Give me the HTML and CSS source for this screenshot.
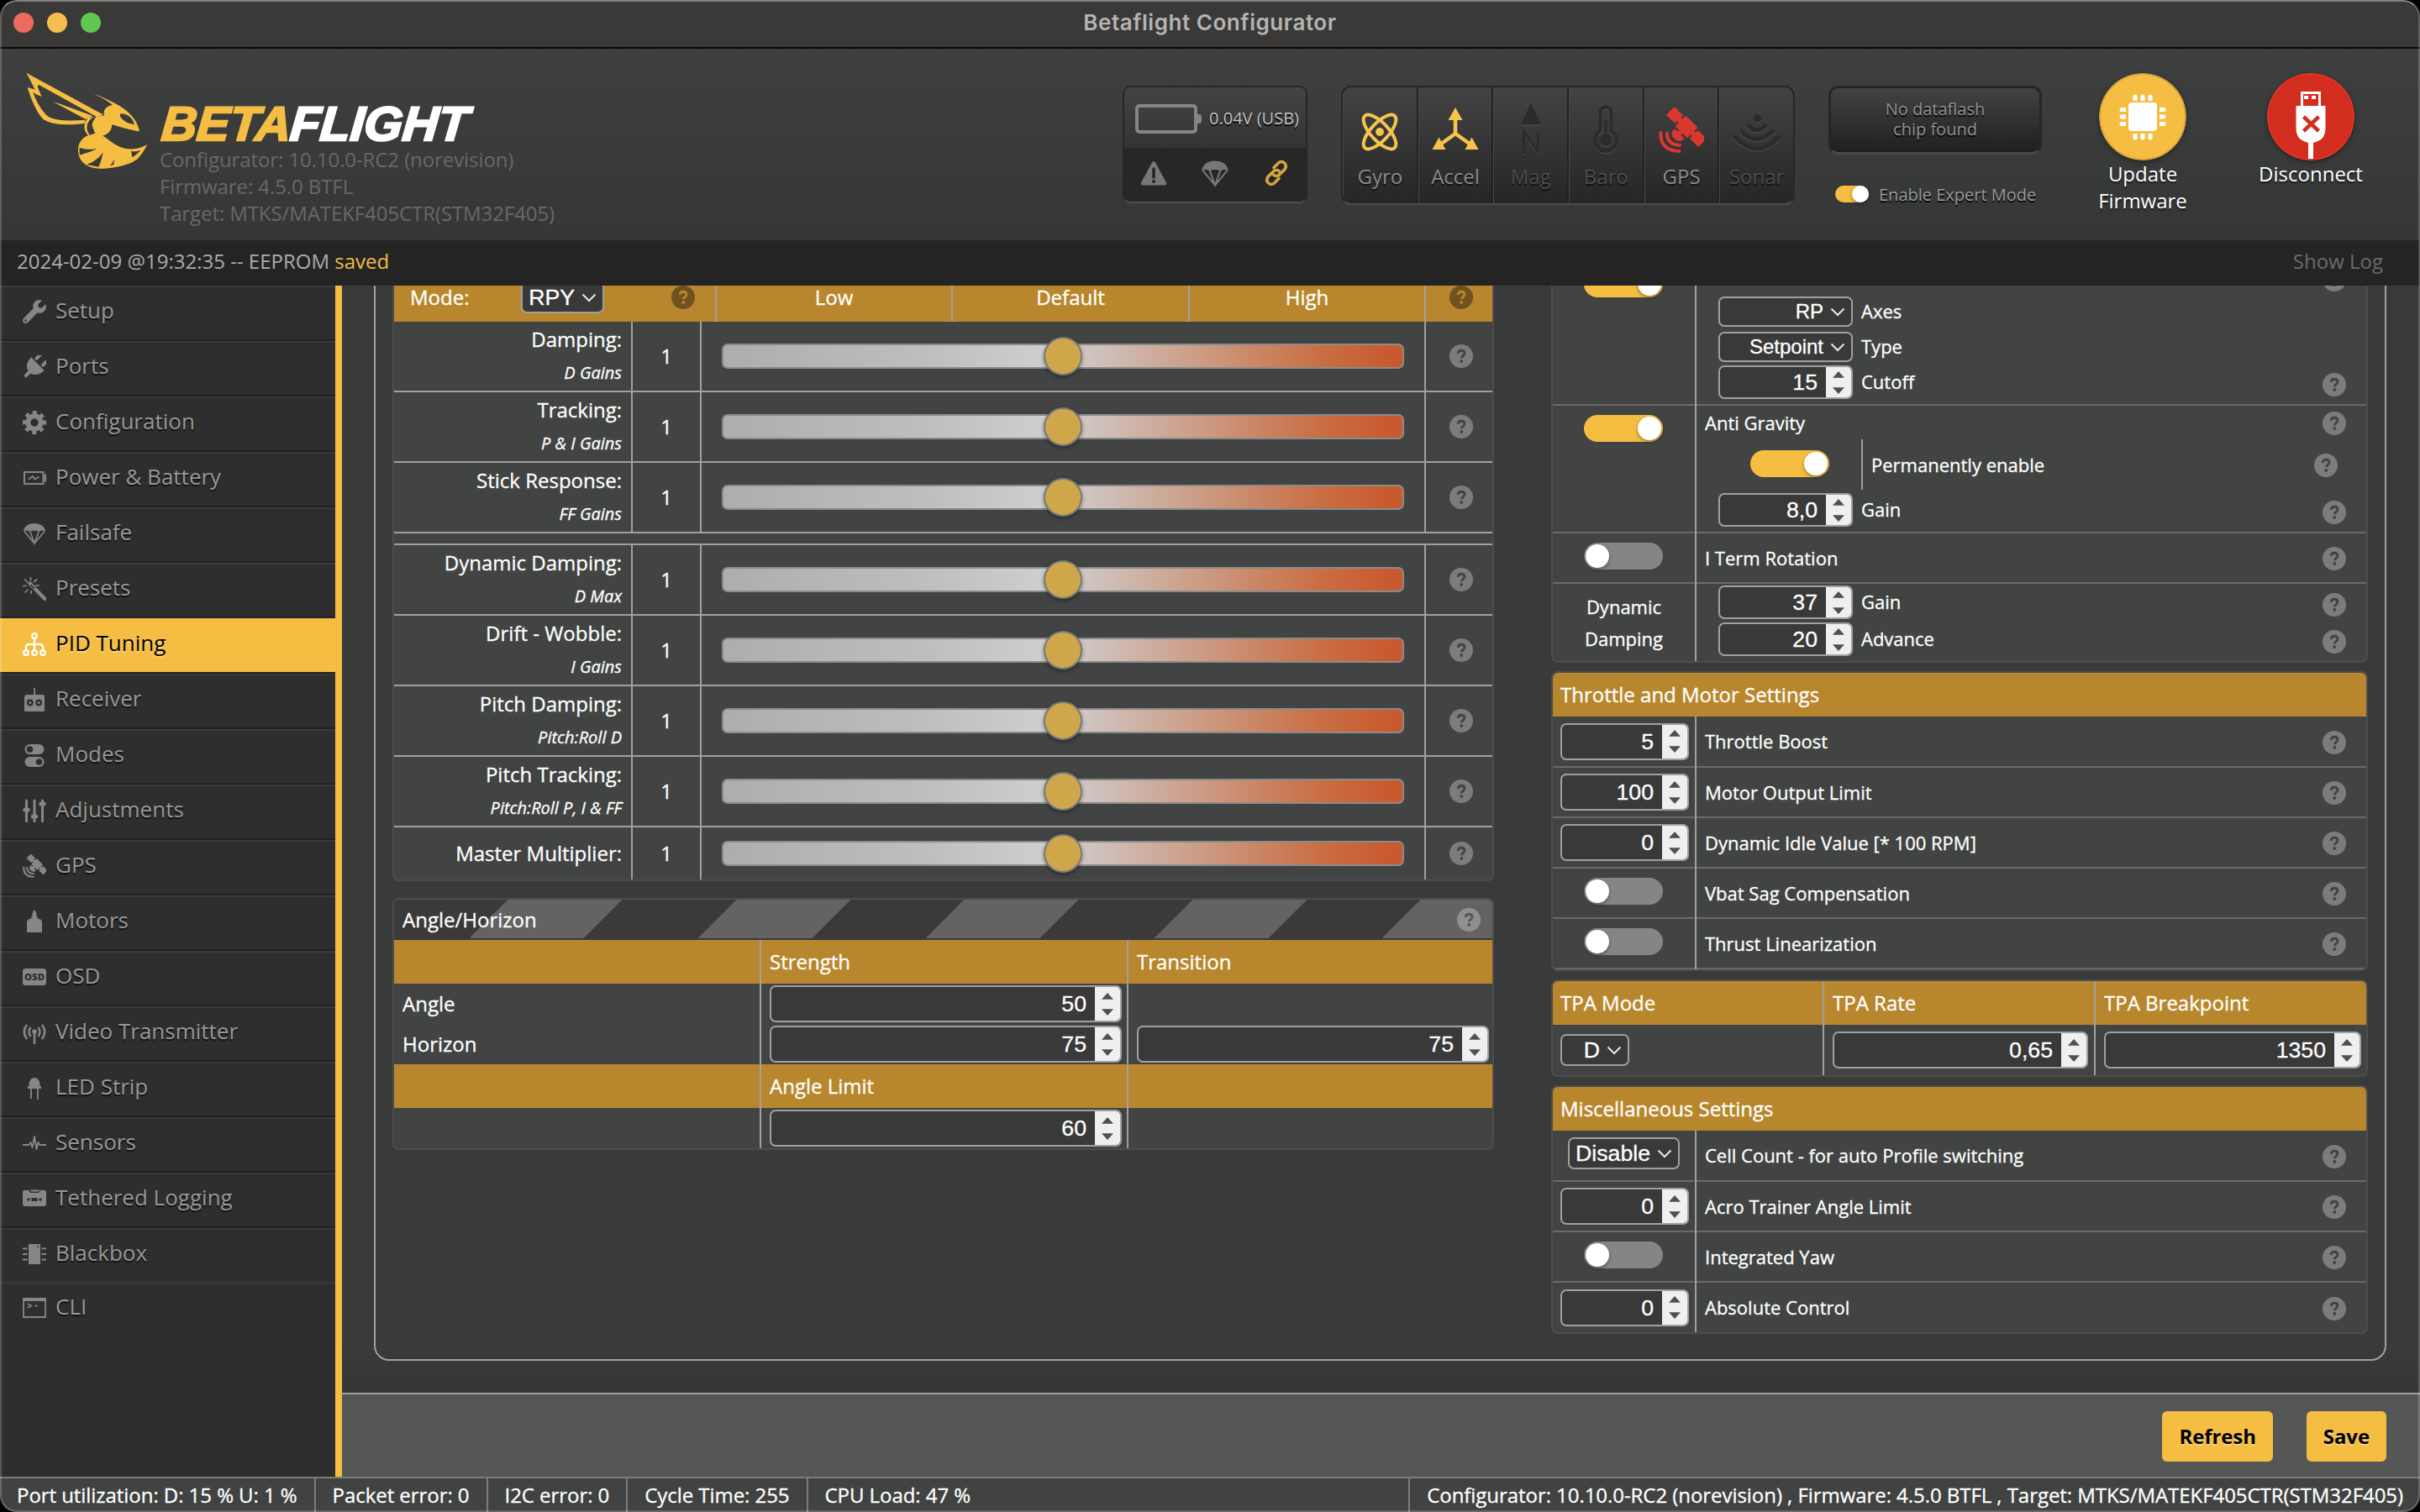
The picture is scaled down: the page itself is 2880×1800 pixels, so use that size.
FILE: index.html
```html
<!DOCTYPE html>
<html lang="en">
<head>
<meta charset="utf-8">
<title>Betaflight Configurator</title>
<link rel="stylesheet" href="styles.css">
</head>
<body>
<svg class="defs" width="0" height="0" aria-hidden="true">
  <symbol id="i-help" viewBox="0 0 28 28"><circle cx="14" cy="14" r="14" fill="currentColor"/><path d="M10.2 10.8c.2-2.3 1.7-3.5 3.9-3.5 2.3 0 3.9 1.3 3.9 3.3 0 2.6-3.6 2.9-3.6 5.6" fill="none" stroke="var(--mark)" stroke-width="2.9"/><circle cx="14.3" cy="20" r="1.9" fill="var(--mark)"/></symbol>
  <symbol id="i-chev" viewBox="0 0 18 11"><path d="M1.5 1.5L9 9l7.500-7.500" fill="none" stroke="#e8e8e8" stroke-width="2"/></symbol>
  <symbol id="i-setup" viewBox="0 0 512 512"><path fill="currentColor" d="M507.730 109.100c-2.240-9.030-13.540-12.090-20.120-5.510l-74.360 74.360-67.880-11.310-11.310-67.880 74.360-74.360c6.620-6.620 3.430-17.900-5.660-20.160-47.380-11.740-99.550.91-136.580 37.930-39.640 39.640-50.550 97.100-34.050 147.200L18.740 402.760c-24.990 24.990-24.990 65.510 0 90.500 24.990 24.990 65.510 24.990 90.500 0l213.210-213.210c50.120 16.710 107.470 5.680 147.370-34.220 37.070-37.070 49.700-89.320 37.910-136.730zM64 472c-13.250 0-24-10.750-24-24 0-13.260 10.750-24 24-24s24 10.740 24 24c0 13.250-10.750 24-24 24z"/></symbol>
  <symbol id="i-ports" viewBox="0 0 28 28"><g transform="rotate(45 14 14)" fill="currentColor"><rect x="6.500" y="-3" width="4" height="10" rx="2"/><rect x="17.500" y="-3" width="4" height="10" rx="2"/><path d="M3 8.500h22c0 7-3 12.500-9 14v7.500h-4v-7.500c-6-1.500-9-7-9-14z"/></g></symbol>
  <symbol id="i-gear" viewBox="0 0 28 28"><g fill="none" stroke="currentColor"><circle cx="14" cy="14" r="7.700" stroke-width="6"/><circle cx="14" cy="14" r="11.900" stroke-width="4.200" stroke-dasharray="5 4.346" transform="rotate(-12 14 14)"/></g></symbol>
  <symbol id="i-batt" viewBox="0 0 28 28"><path fill="none" stroke="currentColor" stroke-width="2" d="M2 7h22.500v14H2z"/><path fill="currentColor" d="M25.500 9.500H28v9h-2.500z"/><path d="M7 15.500l5-3.500 2.500 3.500 5-3" fill="none" stroke="currentColor" stroke-width="1.700"/></symbol>
  <symbol id="i-chute" viewBox="0 0 28 28"><g fill="currentColor"><path d="M1 12C1.500 5.500 7 2 14 2s12.500 3.500 13 10c-2-1.800-5.500-1.800-7.500 0-2.500-1.800-8.500-1.800-11 0-2-1.800-5.500-1.800-7.500 0z"/><path fill="none" stroke="currentColor" stroke-width="1.700" d="M2 11.500L14 26 26 11.500M8.800 11.500L14 26l5.200-14.500"/></g></symbol>
  <symbol id="i-wand" viewBox="0 0 28 28"><path d="M8.500 7.500l18 18.500" stroke="currentColor" stroke-width="4.400" stroke-linecap="round"/><path d="M9.500 9l4.500 4.800" stroke="#2e2e2e" stroke-width="1.600"/><path fill="none" stroke="currentColor" stroke-width="1.700" d="M9.500 0v4.500M2 2.500l4 4M0 10.500h5M2.500 18.500l4-4M10 16v4M17 2.500l-4 3.500M15 10h5"/></symbol>
  <symbol id="i-pid" viewBox="0 0 28 28"><g fill="none" stroke="currentColor" stroke-width="2.300"><circle cx="14" cy="4" r="2.800"/><circle cx="4" cy="24" r="2.800"/><circle cx="14" cy="24" r="2.800"/><circle cx="24" cy="24" r="2.800"/><path d="M14 7v14M4 21v-3q0-4 4-4h12q4 0 4 4v3"/></g></symbol>
  <symbol id="i-rx" viewBox="0 0 28 28"><path fill="currentColor" d="M13.200 0h1.800v8h8q3 0 3 3v15q0 3-3 3H5q-3 0-3-3V11q0-3 3-3h8.200z"/><circle cx="8.800" cy="17.500" r="3.900" fill="#2e2e2e"/><circle cx="19.200" cy="17.500" r="3.900" fill="#2e2e2e"/><circle cx="8.800" cy="17.500" r="1.500" fill="currentColor"/><circle cx="19.200" cy="17.500" r="1.500" fill="currentColor"/></symbol>
  <symbol id="i-modes" viewBox="0 0 28 28"><rect x="2.500" y="1" width="23" height="12" rx="6" fill="currentColor"/><rect x="2.500" y="16" width="23" height="12" rx="6" fill="currentColor"/><circle cx="8.500" cy="7" r="3.800" fill="#2e2e2e"/><circle cx="19.500" cy="22" r="3.800" fill="#2e2e2e"/></symbol>
  <symbol id="i-adj" viewBox="0 0 28 28"><path stroke="currentColor" stroke-width="3" stroke-linecap="round" fill="none" d="M4.500 2v25M14 2v25M23.500 2v25"/><path stroke="currentColor" stroke-width="5" stroke-linecap="round" d="M2.800 13h3.400M12.300 21h3.400M21.800 6h3.400"/></symbol>
  <symbol id="i-gps" viewBox="0 0 54 54"><g fill="currentColor"><g transform="translate(33 23) rotate(45)"><rect x="-10" y="-9" width="20" height="18" rx="1"/><rect x="-27" y="-7" width="14.500" height="14"/><rect x="-14" y="-3" width="5" height="6"/><rect x="12.500" y="-7" width="14.500" height="14"/><rect x="9" y="-3" width="5" height="6"/></g><path d="M18 25a11 11 0 0 0 13 13l-4-5 1-6-5 1z"/><path d="M16.500 27a9 9 0 0 0 12 12l-2.500-10z"/></g><path fill="none" stroke="currentColor" stroke-width="4" stroke-linecap="round" d="M10 31q0 13 15 14M2.500 30q-1 21 22 22"/></symbol>
  <symbol id="i-motor" viewBox="0 0 28 28"><path fill="currentColor" d="M14 0c2 2 3 5 2.500 8l1.500 1v2h2.500l2.500 2.500V27H5V13.500L7.500 11H10V9l1.500-1C11 5 12 2 14 0z"/></symbol>
  <symbol id="i-vtx" viewBox="0 0 28 28"><path fill="none" stroke="currentColor" stroke-width="2.600" d="M5 5Q-1.500 13 5 22M23 5q6.500 8 0 17M9.500 8q-4 5 0 11M18.500 8q4 5 0 11M14 12v16"/><circle cx="14" cy="13" r="2.800" fill="currentColor"/></symbol>
  <symbol id="i-led" viewBox="0 0 28 28"><path fill="currentColor" d="M7.500 10a6.500 8 0 0 1 13 0v2H22v3H6v-3h1.500z"/><path stroke="currentColor" stroke-width="1.800" d="M10 15v12M18 15v13"/></symbol>
  <symbol id="i-sens" viewBox="0 0 28 28"><path fill="none" stroke="currentColor" stroke-width="1.900" stroke-linejoin="round" d="M0 16h7.500l2-3 2 6L14 6l2.500 15L18.500 13l2 3H28"/></symbol>
  <symbol id="i-teth" viewBox="0 0 28 28"><path fill="currentColor" d="M2 4h5l2 3h10l2-3h5q2 0 2 3v13q0 3-3 3H3q-3 0-3-3V7q0-3 2-3z"/><path fill="currentColor" d="M8.500 3.500h12l-1.500 2h-9z"/><circle cx="7" cy="15" r="1.800" fill="#2e2e2e"/><circle cx="21" cy="15" r="1.800" fill="#2e2e2e"/><path fill="#2e2e2e" d="M10.500 13h7v4h-7z"/></symbol>
  <symbol id="i-bbox" viewBox="0 0 28 28"><path fill="currentColor" d="M7 2h14v24H7z"/><path stroke="currentColor" stroke-width="2" d="M0 7.500h5.500M0 14h5.500M0 20.500h5.500M22.500 7.500H28M22.500 14H28M22.500 20.500H28"/><circle cx="18" cy="5" r="1" fill="#2e2e2e"/></symbol>
  <symbol id="i-cli" viewBox="0 0 28 28"><path fill="none" stroke="currentColor" stroke-width="1.800" d="M1 3h26v22H1z"/><path fill="currentColor" d="M1 2.500h26v3.500H1z"/><path fill="none" stroke="currentColor" stroke-width="1.400" d="M5.500 9l5 2.500-5 2.500M14 11.500h4"/></symbol>
</svg>

<div class="window">
  <header class="titlebar">
    <div class="lights"><i class="red"></i><i class="yel"></i><i class="grn"></i></div>
    <span>Betaflight Configurator</span>
  </header>

  <div class="topbar">
    <svg class="bee" viewBox="0 0 480 390" width="160" height="130">
      <g fill="#f5bd42">
        <path fill-rule="evenodd" d="M22 20L298 170l-24 8L66 62 62 70l14 34-16-6 -14-8c12 34 32 68 54 86 26 16 84 16 132 12l0 12c-50 8-112 8-142-10C70 184 40 120 26 72l28 8z"/>
        <path d="M46 50l30 54-16-8-20-44z"/>
        <path d="M118 124c40 12 84 30 142 50l-26 12z"/>
        <path fill-rule="evenodd" d="M264 95c60 24 150 60 162 134-34-4-72-16-98-24 0 22-16 38-40 42l-34-4c-6 2 22-8 6-60 12-8 26-10 40-10-4-18 4-34 30-38-16-16-40-26-66-40zM356 172c4 16 26 30 52 32-6-20-20-36-46-38-4 0-6 2-6 6z"/>
        <path d="M244 180c-18 16-22 48 2 66l20-8c10-20-2-46 26-62z"/>
        <path fill-rule="evenodd" d="M254 240c20-4 40 2 60 18 20 16 50 34 74 34 26 2 50-6 66-16-10 20-20 36-34 50-16 16-70 36-134 36-46 0-80-24-79-68 0-28 20-48 47-54zM212 287v27c24-8 44-12 62-24-22 6-42 4-62-3zM238 348l42 8c8-16 12-32 16-52-14 20-32 34-58 44zM320 352l14-4 2-20c-4 10-8 18-16 24zM396 300l4 22c16-10 24-18 30-26-12 4-22 6-34 4z"/>
      </g>
      <path fill="#3a3b3a" d="M260 180c-24 12-28 42-12 62l20-6c-6-8-2-10-8-16 2-6-6-12-2-20 2-8 6-14 14-22z"/>
    </svg>
    <div class="brand">
      <svg class="wordmark" width="390" height="58" viewBox="0 0 390 58">
        <g transform="translate(1 53) skewX(-5)" class="wm">
          <text x="0" y="0" fill="#f5bd42" stroke="#f5bd42" textLength="154" lengthAdjust="spacingAndGlyphs">BETA</text>
          <text x="153" y="0" fill="#fff" stroke="#fff" textLength="212" lengthAdjust="spacingAndGlyphs">FLIGHT</text>
        </g>
      </svg>
      <p>Configurator: 10.10.0-RC2 (norevision)</p>
      <p>Firmware: 4.5.0 BTFL</p>
      <p>Target: MTKS/MATEKF405CTR(STM32F405)</p>
    </div>

    <div class="battbox">
      <div class="b-top">
        <svg width="80" height="35" viewBox="0 0 80 35"><rect x="2" y="2" width="70" height="31" rx="3" fill="none" stroke="#858585" stroke-width="4"/><path d="M74 12h2q3 0 3 3v5q0 3-3 3h-2z" fill="#858585"/></svg>
        <span>0.04V (USB)</span>
      </div>
      <div class="b-bot">
        <svg width="32" height="30" viewBox="0 0 32 30"><path d="M16 1q1.300 0 2 1.500l13 24q1 3-2 3H3q-3 0-2-3l13-24Q14.700 1 16 1z" fill="#777"/><path d="M16 10v10" stroke="#272727" stroke-width="3.600" stroke-linecap="round"/><circle cx="16" cy="25" r="2.100" fill="#272727"/></svg>
        <svg width="34" height="34" color="#777"><use href="#i-chute"/></svg>
        <svg width="32" height="32" viewBox="0 0 32 32"><g fill="none" stroke="#d4a63e" stroke-width="3.600" stroke-linecap="round"><path d="M13 9.500l5.500-5.500c4.500-4 11.500 1.500 7.500 7.500l-6.500 6.500c-2.500 2-5.500 2-7.500-.5"/><path d="M19 22.500L13.500 28c-4.500 4-11.500-1.500-7.500-7.500l6.500-6.500c2.500-2 5.500-2 7.500.5"/></g></svg>
      </div>
    </div>

    <div class="sensors">
      <div class="sensor on"><svg width="60" height="64" viewBox="0 0 60 64"><g fill="none" stroke="#f6c44d" stroke-width="4"><ellipse cx="30" cy="36" rx="10.500" ry="26" transform="rotate(43 30 36)"/><ellipse cx="30" cy="36" rx="10.500" ry="26" transform="rotate(-43 30 36)"/></g><circle cx="30" cy="36" r="5" fill="#f6c44d"/></svg><span>Gyro</span></div>
      <div class="sensor on"><svg width="60" height="64" viewBox="0 0 60 64"><path d="M30 16v22L12 51M30 38l18 13" fill="none" stroke="#f6c44d" stroke-width="4.500"/><path fill="#f6c44d" d="M30 7l8.500 15h-17zM2.500 57l8-14.500 8 14.500zM57.500 57l-8-14.500-8 14.500z"/></svg><span>Accel</span></div>
      <div class="sensor"><svg width="60" height="64" viewBox="0 0 60 64"><path fill="#2b2b2b" stroke="#2b2b2b" d="M30 3l11.500 24h-23z"/><path d="M21.500 62V36L38 60V35" fill="none" stroke="#2b2b2b" stroke-width="3"/></svg><span>Mag</span></div>
      <div class="sensor"><svg width="60" height="64" viewBox="0 0 60 64"><g fill="none" stroke="#2b2b2b"><path stroke-width="4" d="M23.500 13a6.500 6.500 0 0 1 13 0v22a13 13 0 1 1-13 0z"/><path stroke-width="3.500" d="M30 22v20"/></g><circle cx="30" cy="46" r="7" fill="#2b2b2b"/></svg><span>Baro</span></div>
      <div class="sensor on"><svg class="gpsi" width="54" height="54"><use href="#i-gps"/></svg><span>GPS</span></div>
      <div class="sensor"><svg width="60" height="64" viewBox="0 0 60 64"><circle cx="30" cy="20" r="5" fill="#2b2b2b"/><g fill="none" stroke="#2b2b2b" stroke-width="5" stroke-linecap="round"><path d="M20 29q10 10 20 0M11.500 35.500Q30 54 48.500 35.500M4 42.500q26 27 52 0"/></g></svg><span>Sonar</span></div>
    </div>

    <div class="flash">
      <div class="flash-box">No dataflash<br>chip found</div>
      <div class="expert"><i class="tg sm on"></i><span>Enable Expert Mode</span></div>
    </div>

    <div class="action fw">
      <svg width="104" height="104" viewBox="0 0 104 104"><circle cx="52" cy="52" r="51" fill="#f5bd42" stroke="#d2a23b" stroke-width="2"/><rect x="35" y="35" width="34" height="34" rx="4" fill="#fff"/><path stroke="#fff" stroke-width="5" stroke-linecap="round" d="M43 28v2M52 28v2M61 28v2M43 75v2M52 75v2M61 75v2M27 43.500h2M27 52h2M27 60.500h2M75 43.500h2M75 52h2M75 60.500h2"/><path stroke="#fff" stroke-width="5" d="M43 29v4M52 29v4M61 29v4M43 72v4M52 72v4M61 72v4M28 43.500h4M28 52h4M28 60.500h4M72 43.500h4M72 52h4M72 60.500h4"/></svg>
      <span>Update<br>Firmware</span>
    </div>
    <div class="action dc">
      <svg width="104" height="104" viewBox="0 0 104 104"><circle cx="52" cy="52" r="51" fill="#d32d20" stroke="#ea3323" stroke-width="2"/><path fill="none" stroke="#fff" stroke-width="3" d="M41.500 40V23.500h21V40"/><path fill="#fff" d="M44 27h5v4h-5zM53 27h5v4h-5zM34.500 39h35v27q0 12-10 15.500l-4.500 1.500v19h-6V83l-4.500-1.500q-10-3.500-10-15.500z"/><path d="M43.500 52l18 17M61.500 52l-18 17" stroke="#d32d20" stroke-width="4.500"/></svg>
      <span>Disconnect</span>
    </div>
  </div>

  <div class="log"><span>2024-02-09 @19:32:35 -- EEPROM <b>saved</b></span><span class="show">Show Log</span></div>

  <div class="body">
    <nav class="side">
      <a><svg><use href="#i-setup"/></svg>Setup</a>
      <a><svg><use href="#i-ports"/></svg>Ports</a>
      <a><svg><use href="#i-gear"/></svg>Configuration</a>
      <a><svg><use href="#i-batt"/></svg>Power &amp; Battery</a>
      <a><svg><use href="#i-chute"/></svg>Failsafe</a>
      <a><svg><use href="#i-wand"/></svg>Presets</a>
      <a class="active"><svg><use href="#i-pid"/></svg>PID Tuning</a>
      <a><svg><use href="#i-rx"/></svg>Receiver</a>
      <a><svg><use href="#i-modes"/></svg>Modes</a>
      <a><svg><use href="#i-adj"/></svg>Adjustments</a>
      <a><svg><use href="#i-gps"/></svg>GPS</a>
      <a><svg><use href="#i-motor"/></svg>Motors</a>
      <a><svg viewBox="0 0 28 28"><rect y="4" width="28" height="20" rx="3.500" fill="currentColor"/><text x="14" y="17.700" text-anchor="middle" class="osd-t" textLength="24" lengthAdjust="spacingAndGlyphs">OSD</text></svg>OSD</a>
      <a><svg><use href="#i-vtx"/></svg>Video Transmitter</a>
      <a><svg><use href="#i-led"/></svg>LED Strip</a>
      <a><svg><use href="#i-sens"/></svg>Sensors</a>
      <a><svg><use href="#i-teth"/></svg>Tethered Logging</a>
      <a class="last"><svg><use href="#i-bbox"/></svg>Blackbox</a>
      <a class="last"><svg><use href="#i-cli"/></svg>CLI</a>
    </nav>

    <div class="content">
      <main class="scroll">
        <div class="pane">
          <section class="col-l">
            <div class="box sliders">
              <div class="s-head">
                <div class="h-mode"><span>Mode:</span><span class="sel rpy">RPY<svg><use href="#i-chev"/></svg></span><svg class="help gold"><use href="#i-help"/></svg></div>
                <div>Low</div><div>Default</div><div>High</div>
                <div><svg class="help gold"><use href="#i-help"/></svg></div>
              </div>
              <div class="s-row"><div class="nm">Damping:<em>D Gains</em></div><div class="v">1</div><div class="t"><div class="track"><i></i></div></div><div class="q"><svg class="help"><use href="#i-help"/></svg></div></div>
              <div class="s-row"><div class="nm">Tracking:<em>P &amp; I Gains</em></div><div class="v">1</div><div class="t"><div class="track"><i></i></div></div><div class="q"><svg class="help"><use href="#i-help"/></svg></div></div>
              <div class="s-row"><div class="nm">Stick Response:<em>FF Gains</em></div><div class="v">1</div><div class="t"><div class="track"><i></i></div></div><div class="q"><svg class="help"><use href="#i-help"/></svg></div></div>
              <div class="s-gap"></div>
              <div class="s-row"><div class="nm">Dynamic Damping:<em>D Max</em></div><div class="v">1</div><div class="t"><div class="track"><i></i></div></div><div class="q"><svg class="help"><use href="#i-help"/></svg></div></div>
              <div class="s-row"><div class="nm">Drift - Wobble:<em>I Gains</em></div><div class="v">1</div><div class="t"><div class="track"><i></i></div></div><div class="q"><svg class="help"><use href="#i-help"/></svg></div></div>
              <div class="s-row"><div class="nm">Pitch Damping:<em>Pitch:Roll D</em></div><div class="v">1</div><div class="t"><div class="track"><i></i></div></div><div class="q"><svg class="help"><use href="#i-help"/></svg></div></div>
              <div class="s-row"><div class="nm">Pitch Tracking:<em>Pitch:Roll P, I &amp; FF</em></div><div class="v">1</div><div class="t"><div class="track"><i></i></div></div><div class="q"><svg class="help"><use href="#i-help"/></svg></div></div>
              <div class="s-row master"><div class="nm">Master Multiplier:</div><div class="v">1</div><div class="t"><div class="track"><i></i></div></div><div class="q"><svg class="help"><use href="#i-help"/></svg></div></div>
            </div>

            <div class="box angle">
              <div class="stripes"><span>Angle/Horizon</span><svg class="help light"><use href="#i-help"/></svg></div>
              <div class="a-row gold-row"><div></div><div>Strength</div><div>Transition</div></div>
              <div class="a-row"><div>Angle</div><div><span class="num">50<i></i></span></div><div></div></div>
              <div class="a-row"><div>Horizon</div><div><span class="num">75<i></i></span></div><div><span class="num">75<i></i></span></div></div>
              <div class="a-row gold-row"><div></div><div>Angle Limit</div><div></div></div>
              <div class="a-row"><div></div><div><span class="num">60<i></i></span></div><div></div></div>
            </div>
          </section>

          <section class="col-r">
            <div class="box first">
              <div class="r-row relax">
                <div class="lc"><i class="tg on"></i></div>
                <div class="rc">
                  <div class="ln title"><svg class="help"><use href="#i-help"/></svg></div>
                  <div class="ln sub sl"><span class="sel">RP<svg><use href="#i-chev"/></svg></span><span>Axes</span></div>
                  <div class="ln sub sl"><span class="sel">Setpoint<svg><use href="#i-chev"/></svg></span><span>Type</span></div>
                  <div class="ln sub"><span class="num">15<i></i></span><span>Cutoff</span><svg class="help"><use href="#i-help"/></svg></div>
                </div>
              </div>
              <div class="r-row grav">
                <div class="lc"><i class="tg on"></i></div>
                <div class="rc">
                  <div class="ln title"><span>Anti Gravity</span><svg class="help"><use href="#i-help"/></svg></div>
                  <div class="ln nest"><div class="nl"><i class="tg on"></i></div><span>Permanently enable</span><svg class="help"><use href="#i-help"/></svg></div>
                  <div class="ln sub"><span class="num">8,0<i></i></span><span>Gain</span><svg class="help"><use href="#i-help"/></svg></div>
                </div>
              </div>
              <div class="r-row"><div class="lc"><i class="tg"></i></div><div class="rc"><div class="ln"><span>I Term Rotation</span><svg class="help"><use href="#i-help"/></svg></div></div></div>
              <div class="r-row dyn">
                <div class="lc">Dynamic<br>Damping</div>
                <div class="rc">
                  <div class="ln sub"><span class="num">37<i></i></span><span>Gain</span><svg class="help"><use href="#i-help"/></svg></div>
                  <div class="ln sub"><span class="num">20<i></i></span><span>Advance</span><svg class="help"><use href="#i-help"/></svg></div>
                </div>
              </div>
            </div>

            <div class="box throttle">
              <div class="gh">Throttle and Motor Settings</div>
              <div class="r-row tall"><div class="lc"><span class="num">5<i></i></span></div><div class="rc"><div class="ln"><span>Throttle Boost</span><svg class="help"><use href="#i-help"/></svg></div></div></div>
              <div class="r-row"><div class="lc"><span class="num">100<i></i></span></div><div class="rc"><div class="ln"><span>Motor Output Limit</span><svg class="help"><use href="#i-help"/></svg></div></div></div>
              <div class="r-row"><div class="lc"><span class="num">0<i></i></span></div><div class="rc"><div class="ln"><span>Dynamic Idle Value [* 100 RPM]</span><svg class="help"><use href="#i-help"/></svg></div></div></div>
              <div class="r-row"><div class="lc"><i class="tg"></i></div><div class="rc"><div class="ln"><span>Vbat Sag Compensation</span><svg class="help"><use href="#i-help"/></svg></div></div></div>
              <div class="r-row"><div class="lc"><i class="tg"></i></div><div class="rc"><div class="ln"><span>Thrust Linearization</span><svg class="help"><use href="#i-help"/></svg></div></div></div>
            </div>

            <div class="box tpa">
              <div class="tp gold-row"><div>TPA Mode</div><div>TPA Rate</div><div>TPA Breakpoint</div></div>
              <div class="tp body-row"><div><span class="sel d">D<svg><use href="#i-chev"/></svg></span></div><div><span class="num">0,65<i></i></span></div><div><span class="num">1350<i></i></span></div></div>
            </div>

            <div class="box misc">
              <div class="gh">Miscellaneous Settings</div>
              <div class="r-row tall"><div class="lc"><span class="sel dis">Disable<svg><use href="#i-chev"/></svg></span></div><div class="rc"><div class="ln"><span>Cell Count - for auto Profile switching</span><svg class="help"><use href="#i-help"/></svg></div></div></div>
              <div class="r-row"><div class="lc"><span class="num">0<i></i></span></div><div class="rc"><div class="ln"><span>Acro Trainer Angle Limit</span><svg class="help"><use href="#i-help"/></svg></div></div></div>
              <div class="r-row"><div class="lc"><i class="tg"></i></div><div class="rc"><div class="ln"><span>Integrated Yaw</span><svg class="help"><use href="#i-help"/></svg></div></div></div>
              <div class="r-row end"><div class="lc"><span class="num">0<i></i></span></div><div class="rc"><div class="ln"><span>Absolute Control</span><svg class="help"><use href="#i-help"/></svg></div></div></div>
            </div>
          </section>
        </div>
      </main>
      <div class="toolbar"><button>Refresh</button><button>Save</button></div>
    </div>
  </div>

  <footer class="status">
    <span>Port utilization: D: 15 % U: 1 %</span><span>Packet error: 0</span><span>I2C error: 0</span><span>Cycle Time: 255</span><span class="nb">CPU Load: 47 %</span>
    <span class="right">Configurator: 10.10.0-RC2 (norevision) , Firmware: 4.5.0 BTFL , Target: MTKS/MATEKF405CTR(STM32F405)</span>
  </footer>
</div>
</body>
</html>
```

FILE: styles.css
```css
* { box-sizing: border-box; }
html, body { margin: 0; background: #000; }
body { width: 2880px; height: 1800px; overflow: hidden; font: 24px/32px "Open Sans", sans-serif; color: #fff; }
p { margin: 0; }
.defs { position: absolute; }
.window { position: relative; display: flex; flex-direction: column; width: 2880px; height: 1800px; border-radius: 20px; overflow: hidden; background: #383a39; }
.window::after { content: ""; position: absolute; inset: 0; border: 2px solid rgba(255,255,255,.2); border-top-color: rgba(255,255,255,.36); border-radius: 20px; pointer-events: none; }

.titlebar { display: grid; grid-template-columns: 1fr auto 1fr; align-items: center; height: 58px; padding: 0 0 2px 16px; background: #3a3938; border-bottom: 2px solid #050505; flex: none; }
.titlebar span { margin-left: -16px; font: 600 26px/32px Inter, sans-serif; color: #b5b4b3; letter-spacing: .55px; }
.lights { display: flex; gap: 16px; }
.lights i { width: 24px; height: 24px; border-radius: 50%; }
.red { background: #ed6a5e; } .yel { background: #f5bf4f; } .grn { background: #61c554; }

.topbar { display: flex; height: 228px; flex: none; background: linear-gradient(#3e403f, #353736); }
.bee { margin: 22px 0 0 24px; flex: none; }
.brand { width: 1152px; padding: 56px 0 0 6px; flex: none; color: #686868; letter-spacing: -.09px; }
.wordmark { display: block; overflow: visible; margin-bottom: 2px; }
.wm { font: italic 700 57px "Liberation Sans", Arial, sans-serif; stroke-width: 2.4px; letter-spacing: 0; }

.battbox { width: 220px; height: 140px; margin-top: 44px; border: 2px solid #262626; border-bottom-color: #4c4d4c; border-radius: 10px; overflow: hidden; flex: none; text-shadow: 0 2px 1px #000; }
.b-top { display: flex; align-items: center; height: 72px; padding: 4px 0 0 13px; gap: 8px; background: linear-gradient(#444, #333); font-size: 20px; color: #c2c2c2; white-space: nowrap; }
.b-top svg { flex: none; margin-top: -2px; }
.b-top span { margin-top: -3px; }
.b-bot { display: flex; align-items: center; justify-content: space-between; height: 64px; padding: 0 19px 4px; background: #272727; }

.sensors { display: flex; width: 540px; height: 142px; margin: 44px 0 0 40px; border: 2px solid #262626; border-bottom-color: #4c4d4c; border-radius: 12px; overflow: hidden; background: linear-gradient(#434343, #262626); flex: none; }
.sensor { flex: 1; display: flex; flex-direction: column; align-items: center; padding-top: 17px; border-right: 2px solid #222; border-left: 1px solid #484848; color: #4b4b4b; text-shadow: 0 2px 1px #111; }
.sensor:last-child { border-right: 0; }
.sensor.on { color: #8b8b8b; }
.sensor svg { height: 64px; flex: none; filter: drop-shadow(0 1px 0 rgba(255,255,255,.15)); }
.sensor.on svg { filter: none; }
.sensor .gpsi { height: 54px; margin: 7px 0 3px; color: #d8382e; }
.sensor span { margin-top: 9px; }

.flash { width: 254px; margin: 44px 0 0 40px; flex: none; text-shadow: 0 2px 1px #000; }
.flash-box { height: 82px; padding-top: 13px; border: 3px solid #262626; border-bottom-color: #4a4a4a; border-radius: 12px; background: linear-gradient(#434343, #1f1f1f); text-align: center; font-size: 20px; line-height: 24px; color: #929292; }
.expert { display: flex; align-items: center; gap: 12px; margin-top: 32px; padding-left: 8px; font-size: 20px; color: #999; white-space: nowrap; }
.expert .tg { margin-top: -2px; }

.action { width: 140px; margin-top: 29px; text-align: center; flex: none; text-shadow: 0 2px 2px rgba(0,0,0,.6); }
.fw { margin-left: 50px; } .dc { margin-left: 60px; }
.action svg { display: block; margin: 0 auto; border-radius: 50%; filter: drop-shadow(0 2px 3px rgba(0,0,0,.4)); }

.log { display: flex; justify-content: space-between; align-items: center; height: 54px; padding: 0 44px 4px 20px; background: #242424; color: #acacac; flex: none; }
.log b { font-weight: 400; color: #f5bd42; }
.log .show { color: #6b6b6b; }

.body { display: flex; height: 1418px; flex: none; }
.side { width: 407px; border-right: 8px solid #f5bd42; background: #2e2e2e; flex: none; }
.side a { display: flex; align-items: center; height: 66px; padding: 0 0 9px 27px; border-top: 2px solid #3a3a3a; border-bottom: 2px solid #222; color: #979797; font-size: 26px; gap: 11px; text-shadow: 0 2px 1px #111; }
.side a svg { width: 28px; height: 28px; margin-top: 4px; color: #868686; overflow: visible; }
.side a.last { height: 64px; border-bottom: 0; }
.side a.active { background: #f5bd42; border-top-color: #f5bd42; color: #000; text-shadow: 0 2px 1px rgba(255,255,255,.4); }
.side a.active svg { color: #fff; }
.osd-t { font: 800 10.5px "Open Sans", sans-serif; fill: #2e2e2e; text-shadow: none; }

.content { flex: 1; display: flex; flex-direction: column; min-width: 0; }
.scroll { height: 1318px; overflow: hidden; background: linear-gradient(#393b3a 96%, #343635); -webkit-text-stroke: .3px; }
.pane { display: flex; justify-content: space-between; height: 1310px; margin: -30px 40px 0 38px; padding: 0 20px; border: 2px solid #a0a0a0; border-top: 0; border-radius: 0 0 18px 18px; }
.box { border: 2px solid #4c4e4d; border-radius: 8px; background: #424443; overflow: hidden; }
.col-l { width: 1311px; } .col-r { width: 972px; }
.help { width: 28px; height: 28px; color: #7b7c7b; --mark: #424443; flex: none; }
.help.gold { color: #6f521d; --mark: #b8872d; }
.help.light { color: #8f8f8f; --mark: #555; }
.gold-row, .gh, .s-head { background: #b8872d; }

.sliders { border-top: 0; border-radius: 0 0 8px 8px; height: 739px; }
.s-head { display: grid; grid-template-columns: 384px 281px 282px 281px 79px; height: 73px; line-height: 58px; text-align: center; }
.s-head > div { display: flex; align-items: center; justify-content: center; border-right: 2px solid #a0a0a0; padding-top: 15px; }
.s-head > div:last-child { border-right: 0; padding-left: 4px; }
.s-head > .h-mode { justify-content: flex-start; padding-left: 19px; }
.h-mode .rpy { margin-left: auto; }
.h-mode .help { margin-left: 80px; margin-right: 24px; }
.s-row { display: grid; grid-template-columns: 284px 82px 862px 79px; height: 84px; border-bottom: 2px solid #a0a0a0; }
.s-row.master { height: 62px; border-bottom: 0; }
.s-row > div { display: flex; align-items: center; justify-content: center; border-right: 2px solid #a0a0a0; }
.s-row > .q { border-right: 0; padding-left: 4px; }
.s-row > .nm { flex-direction: column; align-items: flex-end; line-height: 40px; padding-right: 11px; }
.nm em { font-size: 20px; }
.s-gap { height: 14px; border-bottom: 2px solid #a0a0a0; }
.track { position: relative; width: 812px; height: 30px; border: 2px solid #8a8b8a; border-radius: 7px; background: linear-gradient(90deg, #adadad, #bdbfbe 30%, #cfcfcf 48%, #cfc6c3 53%, #cc9a81 71%, #c97046 87%, #c95a2f 98%); }
.track i { position: absolute; left: 381px; top: -10px; width: 46px; height: 46px; border-radius: 50%; background: #d0a64a; border: 2px solid #777b78; box-shadow: 0 2px 5px rgba(0,0,0,.4); }

.sel, .num { display: flex; align-items: center; justify-content: flex-end; border: 2px solid #a0a0a0; border-radius: 7px; background: #393939; font: 26.670px/30px "Liberation Sans", Arial, sans-serif; flex: none; overflow: hidden; }
.sel svg { width: 18px; height: 11px; margin: 0 7px 0 8px; }
.rpy { width: 99px; height: 38px; }
.num { height: 44px; }
.num i { align-self: stretch; width: 30px; margin-left: 10px; background: #efefef url("data:image/svg+xml,%3Csvg xmlns='http://www.w3.org/2000/svg' width='14' height='28'%3E%3Cpath fill='%23505050' d='M0 8h14L7 0zM0 20h14l-7 8z'/%3E%3C/svg%3E") center / 14px 27px no-repeat; flex: none; }

.angle { margin-top: 20px; height: 300px; }
.stripes { display: flex; align-items: center; justify-content: space-between; height: 48px; padding: 1px 14px 0 10px; border-bottom: 2px solid #3a3a3a; background: repeating-linear-gradient(135deg, #3a3a3a 0 96px, #636363 96px 192px); }
.stripes .help { margin-top: 1px; }
.a-row { display: grid; grid-template-columns: 437px 437px 433px; height: 48px; }
.a-row.gold-row { height: 52px; }
.a-row > div { display: flex; align-items: center; padding: 0 6px 0 10px; border-right: 2px solid #a0a0a0; }
.a-row > div:last-child { border-right: 0; padding-right: 4px; }
.a-row .num { flex: 1; }

.first { border-top: 0; border-radius: 0 0 8px 8px; height: 479px; margin-bottom: 10px; }
.r-row { display: flex; height: 60px; border-bottom: 2px solid #696a69; font-size: 22px; }
.lc { display: flex; align-items: center; justify-content: center; width: 171px; margin-bottom: -2px; padding-bottom: 2px; border-right: 2px solid #a0a0a0; flex: none; }
.lc .tg { margin: -4px 1px 0 0; }
.lc .num { width: 153px; margin-left: 2px; }
.rc { flex: 1; display: flex; flex-direction: column; justify-content: center; }
.ln { display: flex; align-items: center; padding: 0 24px 0 10px; }
.ln .help { margin: 2px 0 0 auto; }
.ln > span { margin-top: -1px; }
.ln.sub { height: 40px; padding-left: 26px; gap: 10px; }
.ln.sub .help { margin-top: 6px; }
.ln.sub > .num, .ln.sub > .sel { margin-top: 0; }
.ln.sub > span:nth-child(2) { margin-top: -2px; }
.sub .num { width: 160px; height: 40px; }
.sub .sel { width: 160px; height: 36px; font-size: 24px; }
.ln.sl { height: 36px; margin-bottom: 6px; }
.relax { height: 173px; } .grav { height: 152px; }
.relax .rc, .grav .rc { justify-content: flex-start; }
.relax .lc, .grav .lc { align-items: flex-start; padding-top: 12px; }
.grav .lc { padding-top: 11px; }
.relax .tg, .grav .tg { margin-top: 0; }
.relax .title { height: 40px; margin-top: 3px; }
.relax .title .help { margin-top: 0; }
.relax .sl + .sub:not(.sl) { margin-top: -2px; }
.grav .title { height: 40px; }
.nest { height: 60px; margin: 0 0 4px 26px; padding: 0 34px 0 0; }
.nl { display: flex; align-items: center; justify-content: center; width: 172px; height: 60px; margin-right: 10px; border-right: 2px solid #a0a0a0; }
.nest .tg { margin-top: -2px; }
.dyn { height: 93px; border-bottom: 0; }
.dyn .lc { line-height: 38px; text-align: center; padding-bottom: 4px; }
.dyn .rc { gap: 4px; justify-content: flex-start; padding-top: 2px; }

.gh { height: 52px; padding: 0 9px; line-height: 51px; }
.throttle { height: 357px; margin-bottom: 10px; }
.r-row.tall { height: 61px; }
.tpa { height: 116px; margin-bottom: 10px; }
.tp { display: grid; grid-template-columns: 323px 323px 322px; height: 52px; }
.tp > div { display: flex; align-items: center; padding: 0 7px 0 10px; border-right: 2px solid #a0a0a0; }
.tp > div:first-child { padding-left: 9px; }
.tp > div:last-child { border-right: 0; padding-right: 6px; }
.tp.body-row { height: 60px; }
.tp .num { flex: 1; }
.sel.d { width: 82px; height: 38px; }
.misc { height: 296px; }
.sel.dis { width: 133px; height: 38px; margin-top: -5px; }
.r-row.end { border-bottom: 0; height: 59px; }

.tg { position: relative; display: block; width: 94px; height: 32px; border-radius: 16px; background: #858585; flex: none; }
.tg::after { content: ""; position: absolute; left: 2px; top: 2px; width: 28px; height: 28px; border-radius: 50%; background: #fff; box-shadow: 0 2px 4px rgba(0,0,0,.35); }
.tg.on { background: #f5bd42; }
.tg.on::after { left: auto; right: 2px; }
.tg.sm { width: 40px; height: 20px; }
.tg.sm::after { top: 0; right: 0; width: 20px; height: 20px; }

.toolbar { display: flex; justify-content: flex-end; gap: 40px; height: 100px; padding: 20px 40px; border-top: 2px solid #a0a0a0; background: #555756; }
.toolbar button { height: 60px; padding: 0 20px; border: 0; border-radius: 6px; background: #f5bd42; color: #000; font: 700 24px/32px "Open Sans", sans-serif; letter-spacing: -.1px; text-shadow: 0 2px 1px rgba(255,255,255,.35); }

.status { display: flex; align-items: center; height: 42px; border-top: 2px solid #7c7d78; background: #414342; white-space: nowrap; flex: none; letter-spacing: -.055px; -webkit-text-stroke: .3px; }
.status span { height: 40px; padding: 0 20px; line-height: 39px; border-right: 2px solid #7c7d78; }
.status .nb { border-right: 0; }
.status .right { margin-left: auto; border-right: 0; border-left: 2px solid #7c7d78; }
```
